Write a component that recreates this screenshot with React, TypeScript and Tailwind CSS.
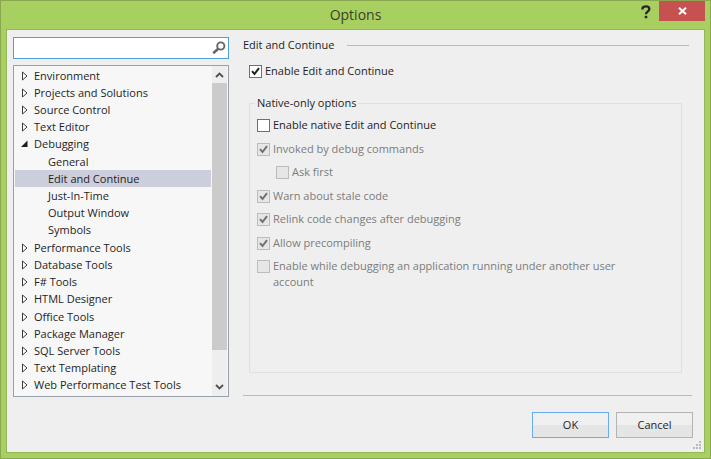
import { useState } from "react";

type Node = { label: string; level?: number; open?: boolean };

const nodes: Node[] = [
  { label: "Environment" },
  { label: "Projects and Solutions" },
  { label: "Source Control" },
  { label: "Text Editor" },
  { label: "Debugging", open: true },
  { label: "General", level: 1 },
  { label: "Edit and Continue", level: 1 },
  { label: "Just-In-Time", level: 1 },
  { label: "Output Window", level: 1 },
  { label: "Symbols", level: 1 },
  { label: "Performance Tools" },
  { label: "Database Tools" },
  { label: "F# Tools" },
  { label: "HTML Designer" },
  { label: "Office Tools" },
  { label: "Package Manager" },
  { label: "SQL Server Tools" },
  { label: "Text Templating" },
  { label: "Web Performance Test Tools" },
];

function Expander({ open }: { open?: boolean }) {
  return (
    <svg width="8" height="10" viewBox="0 0 8 10" className="shrink-0" aria-hidden="true">
      {open ? (
        <path d="M7.5 1.5V8H1Z" fill="#1e1e1e" />
      ) : (
        <path d="M2.5 1V9L7 5Z" fill="#fff" stroke="#3c3c3c" strokeWidth="1" />
      )}
    </svg>
  );
}

function Tree() {
  const [selected, setSelected] = useState("Edit and Continue");
  return (
    <div className="mt-[6px] flex h-[332px] border border-[#9aa0aa] bg-[#f7f7f7] pr-px">
      <ul role="tree" aria-label="Categories" className="grid min-w-0 flex-1 auto-rows-fr pt-px pb-[2px] pl-px">
        {nodes.map((n) => (
          <li key={n.label} role="none" className="flex min-h-0">
            <button
              type="button"
              role="treeitem"
              aria-selected={selected === n.label}
              onClick={() => setSelected(n.label)}
              className={
                "flex min-w-0 flex-1 items-center overflow-hidden text-left leading-4 whitespace-nowrap text-[#1e1e1e] " +
                (n.level ? "pl-[33px] " : "gap-[6px] pl-[5px] ") +
                (selected === n.label ? "bg-[#cccedb]" : "")
              }
            >
              {!n.level && <Expander open={n.open} />}
              {n.label}
            </button>
          </li>
        ))}
      </ul>
      <div className="ml-px flex w-[15px] flex-col bg-[#eeeeee]">
        <button type="button" aria-label="Scroll up" className="grid h-[17px] place-items-center">
          <svg width="9" height="6" viewBox="0 0 9 6" aria-hidden="true">
            <path d="M1 5L4.5 1.5L8 5" fill="none" stroke="#505050" strokeWidth="1.8" />
          </svg>
        </button>
        <div className="h-[267px] bg-[#cbcbcb]" />
        <div className="flex-1" />
        <button type="button" aria-label="Scroll down" className="grid h-[18px] place-items-center">
          <svg width="9" height="6" viewBox="0 0 9 6" aria-hidden="true">
            <path d="M1 1L4.5 4.5L8 1" fill="none" stroke="#505050" strokeWidth="1.8" />
          </svg>
        </button>
      </div>
    </div>
  );
}

type CheckProps = { label: string; checked?: boolean; disabled?: boolean; indent?: boolean };

function Check({ label, checked, disabled, indent }: CheckProps) {
  return (
    <label
      className={
        "flex items-start gap-[3px] leading-4 " +
        (indent ? "ml-[19px] " : "") +
        (disabled ? "text-[#7c7c7c]" : "text-[#1e1e1e]")
      }
    >
      <span className="mt-[2px] grid size-[13px] shrink-0">
        <input
          type="checkbox"
          defaultChecked={checked}
          disabled={disabled}
          className="peer col-start-1 row-start-1 size-[13px] appearance-none border border-[#707070] bg-white disabled:border-[#bcbcbc] disabled:bg-[#e6e6e6]"
        />
        <svg
          viewBox="0 0 13 13"
          aria-hidden="true"
          className="pointer-events-none invisible col-start-1 row-start-1 size-[13px] text-[#1e1e1e] peer-checked:visible peer-disabled:text-[#707070]"
        >
          <path d="M3 6.2L5.5 9L10 3.2" fill="none" stroke="currentColor" strokeWidth="2" />
        </svg>
      </span>
      <span>{label}</span>
    </label>
  );
}

const buttonBase =
  "h-[26px] w-[77px] border bg-linear-to-b from-[#f0f0f0] from-50% to-[#e5e5e5] to-50% text-[#1e1e1e]";

export default function App() {
  return (
    <div className="flex min-h-screen flex-col border border-[#8aa651] bg-[#a8d061] px-[5px] pb-[5px] font-['Open_Sans',sans-serif] text-[11px]">
      <header className="grid h-7 grid-cols-[1fr_auto_1fr] items-start">
        <h1 className="col-start-2 pt-[2px] text-[14px] leading-6 text-[#3a3f2c]">Options</h1>
        <div className="flex items-start justify-end">
          <button type="button" aria-label="Help" className="grid h-[21px] w-[26px] place-items-center">
            <svg width="10" height="14" viewBox="0 0 10 14" aria-hidden="true">
              <path d="M1.5 4.6V3.6Q1.5 1.4 5 1.4Q8.3 1.4 8.3 4Q8.3 5.4 6.8 6.4Q5 7.5 5 9.2" fill="none" stroke="#2a2430" strokeWidth="2.4" />
              <path d="M3.7 10.8H6.3V13.2H3.7Z" fill="#2a2430" />
            </svg>
          </button>
          <button type="button" aria-label="Close" className="grid h-5 w-[46px] place-items-center bg-[#c75050]">
            <svg width="9" height="8" viewBox="0 0 9 8" aria-hidden="true">
              <path d="M1 0.8L8 7.2M8 0.8L1 7.2" stroke="#fff" strokeWidth="2" />
            </svg>
          </button>
        </div>
      </header>

      <main className="flex flex-1 flex-col border border-[#93b658] bg-[#efefef]">
        <div className="flex pt-[7px] pr-3 pl-[6px]">
          <aside className="w-[216px] shrink-0">
            <div className="flex h-[22px] items-center border border-[#4f9fdc] bg-white pr-[2px]">
              <input type="search" aria-label="Search options" className="min-w-0 flex-1 px-1 outline-none" />
              <svg width="14" height="14" viewBox="0 0 14 14" aria-hidden="true">
                <circle cx="8.8" cy="5" r="3.6" fill="none" stroke="#666" strokeWidth="1.9" />
                <path d="M6.2 7.8L1.2 12.2" stroke="#666" strokeWidth="2.6" />
              </svg>
            </div>
            <Tree />
          </aside>

          <section className="ml-[14px] flex min-w-0 flex-1 flex-col">
            <div className="flex items-center gap-3 pr-[3px]">
              <h2 className="leading-4 text-[#1e1e1e]">Edit and Continue</h2>
              <div className="h-px flex-1 bg-[#bdbabd]" />
            </div>
            <div className="mt-[10px] pl-[6px]">
              <Check label="Enable Edit and Continue" checked />
            </div>
            <fieldset className="mt-4 mr-[10px] ml-[6px] h-[278px] border border-[#e0e0e0] pl-[7px]">
              <legend className="-ml-[2px] px-[2px] leading-4 text-[#1e1e1e]">Native-only options</legend>
              <div className="mt-[6px] grid h-[141px] auto-rows-fr">
                <Check label="Enable native Edit and Continue" />
                <Check label="Invoked by debug commands" checked disabled />
                <Check label="Ask first" disabled indent />
                <Check label="Warn about stale code" checked disabled />
                <Check label="Relink code changes after debugging" checked disabled />
                <Check label="Allow precompiling" checked disabled />
              </div>
              <div className="max-w-[390px]">
                <Check label="Enable while debugging an application running under another user account" disabled />
              </div>
            </fieldset>
            <div className="mt-auto mb-px h-px bg-[#bdbabd]" />
          </section>
        </div>

        <footer className="mt-auto flex items-end justify-end pt-[14px] pr-[2px] pb-[2px]">
          <div className="mb-3 flex gap-[7px]">
            <button type="button" className={buttonBase + " border-[#66acee]"}>
              OK
            </button>
            <button type="button" className={buttonBase + " border-[#b4b4b4]"}>
              Cancel
            </button>
          </div>
          <svg width="9" height="9" viewBox="0 0 9 9" aria-hidden="true" fill="#b9b9b9">
            <path d="M6 0h2v2h-2zM3 3h2v2h-2zM6 3h2v2h-2zM0 6h2v2h-2zM3 6h2v2h-2zM6 6h2v2h-2z" />
          </svg>
        </footer>
      </main>
    </div>
  );
}
